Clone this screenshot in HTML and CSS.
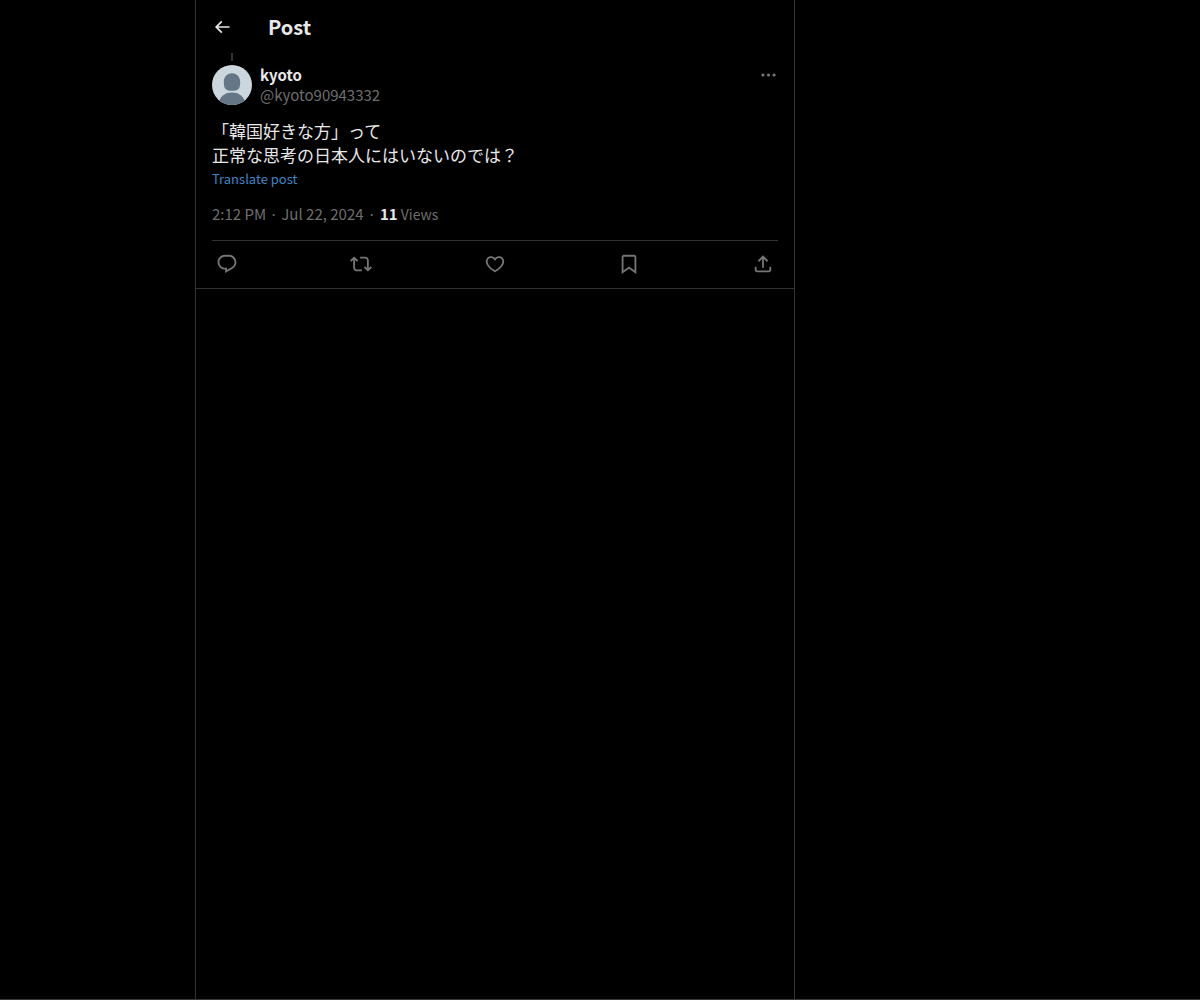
FILE: index.html
```html
<!DOCTYPE html>
<html lang="en">
<head>
  <meta charset="UTF-8">
  <meta name="viewport" content="width=device-width, initial-scale=1">
  <title>Post</title>
  <link rel="stylesheet" href="styles.css">
</head>
<body>
  <div class="layout">
    <main class="column">
      <header class="topbar">
        <button class="icon-btn back" type="button" aria-label="Back">
          <svg viewBox="0 0 24 24"><path d="M7.414 13l5.043 5.04-1.414 1.42L3.586 12l7.457-7.46 1.414 1.42L7.414 11H21v2H7.414z"/></svg>
        </button>
        <h1 class="title">Post</h1>
      </header>

      <article class="post">
        <!-- thread line from the post above -->
        <div class="thread-line"></div>

        <div class="author">
          <a class="avatar" href="#" aria-label="kyoto">
            <svg viewBox="0 0 40 40">
              <rect width="40" height="40" fill="#ccd6dd"/>
              <path fill="#657786" d="M20 8.300c5 0 8.200 3.500 8.200 8.700 0 3-.4 5.500-1.700 7-1.300 1.400-3.500 1.800-6.500 1.800s-5.200-.4-6.500-1.800c-1.300-1.500-1.700-4-1.700-7 0-5.200 3.200-8.700 8.200-8.700zM6.500 40c.8-8 5.500-12.600 13.500-12.600S32.700 32 33.500 40z"/>
            </svg>
          </a>
          <div class="names">
            <a class="name" href="#">kyoto</a>
            <a class="handle" href="#">@kyoto90943332</a>
          </div>
          <button class="icon-btn more" type="button" aria-label="More">
            <svg viewBox="0 0 24 24"><path d="M3 12c0-1.100.9-2 2-2s2 .9 2 2-.9 2-2 2-2-.9-2-2zm9 2c1.100 0 2-.9 2-2s-.9-2-2-2-2 .9-2 2 .9 2 2 2zm7 0c1.100 0 2-.9 2-2s-.9-2-2-2-2 .9-2 2 .9 2 2 2z"/></svg>
          </button>
        </div>

        <p class="text" lang="ja">「韓国好きな方」って<br>正常な思考の日本人にはいないのでは？</p>
        <button class="translate" type="button">Translate post</button>

        <div class="meta">
          <a href="#">2:12 PM · Jul 22, 2024</a>
          <span>·</span>
          <span class="views"><strong>11</strong> Views</span>
        </div>

        <div class="actions">
          <button class="icon-btn" type="button" aria-label="Reply">
            <svg viewBox="0 0 24 24"><path d="M1.751 10c0-4.420 3.584-8 8.005-8h4.366c4.490 0 8.129 3.640 8.129 8.130 0 2.960-1.607 5.680-4.196 7.110l-8.054 4.460v-3.690h-.067c-4.490.1-8.183-3.510-8.183-8.010zm8.005-6c-3.317 0-6.005 2.690-6.005 6 0 3.370 2.770 6.080 6.138 6.010l.351-.01h1.761v2.300l5.087-2.810c1.951-1.080 3.163-3.130 3.163-5.360 0-3.390-2.744-6.130-6.129-6.130H9.756z"/></svg>
          </button>
          <button class="icon-btn" type="button" aria-label="Repost">
            <svg viewBox="0 0 24 24"><path d="M4.500 3.880l4.432 4.140-1.364 1.460L5.500 7.550V16c0 1.100.896 2 2 2H13v2H7.500c-2.209 0-4-1.790-4-4V7.550L1.432 9.480.068 8.020 4.500 3.880zM16.500 6H11V4h5.500c2.209 0 4 1.790 4 4v8.450l2.068-1.930 1.364 1.460-4.432 4.140-4.432-4.140 1.364-1.460 2.068 1.930V8c0-1.100-.896-2-2-2z"/></svg>
          </button>
          <button class="icon-btn" type="button" aria-label="Like">
            <svg viewBox="0 0 24 24"><path d="M16.697 5.500c-1.222-.06-2.679.51-3.890 2.160l-.805 1.090-.806-1.090C9.984 6.010 8.526 5.440 7.304 5.500c-1.243.07-2.349.78-2.910 1.910-.552 1.120-.633 2.780.479 4.820 1.074 1.970 3.257 4.270 7.129 6.610 3.870-2.340 6.052-4.640 7.126-6.610 1.111-2.040 1.030-3.700.477-4.820-.561-1.130-1.666-1.840-2.908-1.910zm4.187 7.690c-1.351 2.480-4.001 5.120-8.379 7.670l-.503.300-.504-.300c-4.379-2.550-7.029-5.190-8.382-7.670-1.360-2.500-1.410-4.860-.514-6.670.887-1.790 2.647-2.910 4.601-3.010 1.651-.09 3.368.560 4.798 2.010 1.429-1.450 3.146-2.100 4.796-2.010 1.954.1 3.714 1.220 4.601 3.010.896 1.810.846 4.170-.514 6.670z"/></svg>
          </button>
          <button class="icon-btn" type="button" aria-label="Bookmark">
            <svg viewBox="0 0 24 24"><path d="M4 4.500C4 3.120 5.119 2 6.500 2h11C18.881 2 20 3.120 20 4.500v18.440l-8-5.710-8 5.710V4.500zM6.500 4c-.276 0-.5.220-.5.500v14.560l6-4.290 6 4.290V4.500c0-.280-.224-.5-.5-.5h-11z"/></svg>
          </button>
          <button class="icon-btn" type="button" aria-label="Share">
            <svg viewBox="0 0 24 24"><path d="M12 2.590l5.700 5.700-1.410 1.420L13 6.410V16h-2V6.410l-3.300 3.300-1.410-1.420L12 2.590zM21 15l-.02 3.510c0 1.380-1.120 2.490-2.500 2.490H5.500C4.110 21 3 19.880 3 18.500V15h2v3.500c0 .280.220.5.5.5h12.980c.280 0 .5-.220.5-.5L19 15h2z"/></svg>
          </button>
        </div>
      </article>
    </main>
  </div>
</body>
</html>
```
FILE: styles.css
```css
* {
  box-sizing: border-box;
}

body {
  margin: 0;
  background-color: #000;
  color: #e8e8e8;
  font-family: "Noto Sans CJK JP", sans-serif;
  font-size: 15px;
  line-height: 20px;
}

a {
  color: inherit;
  text-decoration: none;
}

button {
  padding: 0;
  border: none;
  background: none;
  color: inherit;
  font: inherit;
  cursor: pointer;
}

.layout {
  display: grid;
  grid-template-columns: 195px minmax(0, 600px) 1fr;
  min-height: 100vh;
  border-bottom: 1px solid #3a3637;
}

.column {
  grid-column: 2;
  border: solid #333;
  border-width: 0 1px;
}

.icon-btn {
  display: flex;
  color: #757575;
}

.icon-btn svg {
  width: 22px;
  height: 22px;
  fill: currentColor;
}

/* Top bar */
.topbar {
  display: flex;
  align-items: center;
  gap: 36px;
  height: 53px;
  padding: 0 16px;
}

.back {
  color: #e8e8e8;
}

.back svg {
  width: 20px;
  height: 20px;
}

.title {
  margin: 0;
  font-size: 20px;
  font-weight: 700;
  line-height: 24px;
}

/* Post */
.post {
  padding: 0 16px;
  border-bottom: 1px solid #333;
}

.thread-line {
  width: 2px;
  height: 8px;
  margin: 0 19px 4px;
  background-color: #333;
}

.author {
  display: flex;
  align-items: flex-start;
  gap: 8px;
}

.avatar svg {
  display: block;
  width: 40px;
  height: 40px;
  border-radius: 50%;
}

.names {
  display: flex;
  flex: 1;
  flex-direction: column;
}

.name {
  font-weight: 700;
}

.handle,
.meta {
  color: #6e6e6e;
}

.more svg {
  width: 19px;
  height: 20px;
}

.text {
  margin: 14px 0 0;
  font-size: 17px;
  line-height: 24px;
}

.translate {
  display: block;
  color: #3f86c6;
  font-size: 13px;
  line-height: 24px;
}

.meta {
  display: flex;
  gap: 4px;
  padding: 13px 0 16px;
}

.views {
  font-size: 14px;
}

.views strong {
  color: #e8e8e8;
  font-size: 15px;
}

.actions {
  display: flex;
  align-items: center;
  justify-content: space-between;
  height: 48px;
  padding: 0 4px 1px;
  border-top: 1px solid #333;
}
```
